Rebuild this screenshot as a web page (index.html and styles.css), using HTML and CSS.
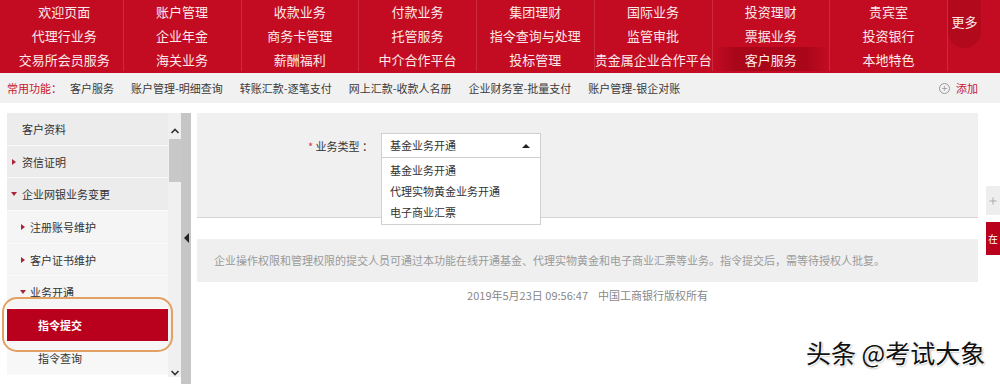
FILE: index.html
```html
<!DOCTYPE html>
<html lang="zh-CN">
<head>
<meta charset="utf-8">
<title>中国工商银行企业网银</title>
<link rel="stylesheet" href="styles.css">
</head>
<body>
<div class="page">
  <nav class="topnav">
    <a class="nav-cell">欢迎页面</a>
    <a class="nav-cell">账户管理</a>
    <a class="nav-cell">收款业务</a>
    <a class="nav-cell">付款业务</a>
    <a class="nav-cell">集团理财</a>
    <a class="nav-cell">国际业务</a>
    <a class="nav-cell">投资理财</a>
    <a class="nav-cell">贵宾室</a>
    <div class="more-cell"><span class="more-pill">更多</span></div>
    <a class="nav-cell">代理行业务</a>
    <a class="nav-cell">企业年金</a>
    <a class="nav-cell">商务卡管理</a>
    <a class="nav-cell">托管服务</a>
    <a class="nav-cell">指令查询与处理</a>
    <a class="nav-cell">监管审批</a>
    <a class="nav-cell">票据业务</a>
    <a class="nav-cell">投资银行</a>
    <a class="nav-cell">交易所会员服务</a>
    <a class="nav-cell">海关业务</a>
    <a class="nav-cell">薪酬福利</a>
    <a class="nav-cell">中介合作平台</a>
    <a class="nav-cell">投标管理</a>
    <a class="nav-cell">贵金属企业合作平台</a>
    <a class="nav-cell active">客户服务</a>
    <a class="nav-cell">本地特色</a>
  </nav>

  <div class="quickbar">
    <span class="quick-label">常用功能：</span>
    <a class="quick-item">客户服务</a>
    <a class="quick-item">账户管理-明细查询</a>
    <a class="quick-item">转账汇款-逐笔支付</a>
    <a class="quick-item">网上汇款-收款人名册</a>
    <a class="quick-item">企业财务室-批量支付</a>
    <a class="quick-item">账户管理-银企对账</a>
    <a class="quick-add"><span class="plus">+</span>添加</a>
  </div>

  <div class="workspace">
    <aside class="sidebar">
      <ul class="menu">
        <li class="menu-item lvl1">客户资料</li>
        <li class="menu-item lvl1 arrow-right">资信证明</li>
        <li class="menu-item lvl1 arrow-down">企业网银业务变更</li>
        <li class="menu-item lvl2 arrow-right">注册账号维护</li>
        <li class="menu-item lvl2 arrow-right">客户证书维护</li>
        <li class="menu-item lvl2 arrow-down">业务开通</li>
        <li class="menu-item lvl3 selected">指令提交</li>
        <li class="menu-item lvl3">指令查询</li>
      </ul>
      <div class="scrollbar">
        <svg class="chev" width="10" height="8" viewBox="0 0 10 8"><path d="M1.5 6 L5 2.5 L8.5 6" fill="none" stroke="#333" stroke-width="1.6"/></svg>
        <div class="thumb"></div>
        <div class="track-space"></div>
        <svg class="chev" width="10" height="8" viewBox="0 0 10 8"><path d="M1.5 2 L5 5.5 L8.5 2" fill="none" stroke="#333" stroke-width="1.6"/></svg>
      </div>
    </aside>
    <div class="splitter"><span class="split-arrow"></span></div>

    <main class="main">
      <section class="form-panel">
        <div class="form-row">
          <label class="form-label"><span class="req">*</span> 业务类型 ：</label>
          <div class="select">
            <div class="select-box">基金业务开通<span class="caret-up"></span></div>
            <ul class="select-list">
              <li>基金业务开通</li>
              <li>代理实物黄金业务开通</li>
              <li>电子商业汇票</li>
            </ul>
          </div>
        </div>
      </section>
      <div class="notice">企业操作权限和管理权限的提交人员可通过本功能在线开通基金、代理实物黄金和电子商业汇票等业务。指令提交后，需等待授权人批复。</div>
      <footer class="footer">2019年5月23日 09:56:47&nbsp;&nbsp;&nbsp;&nbsp;中国工商银行版权所有</footer>
    </main>
  </div>

  <div class="side-tabs">
    <div class="side-tab gray">
      <svg width="8" height="8" viewBox="0 0 8 8"><path d="M4 0.5 V7.5 M0.5 4 H7.5" stroke="#aaa" stroke-width="1"/></svg>
    </div>
    <div class="side-tab red">在</div>
  </div>

  <div class="annotation"></div>
  <div class="watermark">头条 @考试大象</div>
</div>
</body>
</html>
```

FILE: styles.css
```css
* { box-sizing: border-box; }
html, body { margin: 0; padding: 0; }
body {
  font-family: "Noto Sans CJK SC", "Microsoft YaHei", sans-serif;
  background: #fff;
  color: #333;
  width: 1000px;
  height: 384px;
  overflow: hidden;
}
.page { position: relative; width: 1000px; height: 384px; overflow: hidden; }
a { text-decoration: none; color: inherit; }
ul { list-style: none; margin: 0; padding: 0; }

/* top nav */
.topnav {
  display: grid;
  grid-template-columns: repeat(8, 117.75px) 1fr;
  grid-template-rows: 23px 24px 24px;
  padding-left: 5px;
  padding-bottom: 2px;
  height: 73px;
  background: #c30c22;
}
.nav-cell {
  display: flex;
  align-items: center;
  justify-content: center;
  color: #fbe9ec;
  font-size: 13px;
  border-left: 1px solid rgba(255,255,255,0.13);
  white-space: nowrap;
}
.nav-cell:nth-child(10), .nav-cell:nth-child(1), .nav-cell:nth-child(18) { border-left-color: transparent; }
.nav-cell.active {
  background: linear-gradient(90deg, #c30c22 0%, #a9061a 20%, #a9061a 80%, #c30c22 100%);
}
.more-cell {
  grid-column: 9;
  grid-row: 1 / 4;
  border-left: 1px solid rgba(255,255,255,0.13);
}
.more-pill {
  display: flex;
  align-items: center;
  justify-content: center;
  width: 33px;
  height: 48px;
  padding-bottom: 6px;
  background: #b3091c;
  border-radius: 0 0 16px 16px;
  color: #fbe9ec;
  font-size: 13px;
}

/* quick bar */
.quickbar {
  display: flex;
  align-items: center;
  height: 30px;
  padding: 0 22px 0 7px;
  background: #f1f1f1;
  font-size: 11px;
  color: #3a3a3a;
}
.quick-label { color: #c7162b; margin-right: 8px; }
.quick-item { margin-right: 17px; }
.quick-add {
  margin-left: auto;
  color: #c7162b;
  display: flex;
  align-items: center;
}
.plus {
  display: inline-flex;
  align-items: center;
  justify-content: center;
  width: 11px;
  height: 11px;
  border: 1px solid #999;
  border-radius: 50%;
  color: #999;
  font-size: 10px;
  line-height: 1;
  margin-right: 6px;
}

/* workspace */
.workspace {
  display: flex;
  margin-top: 10px;
  padding-left: 7px;
  height: 271px;
}
.sidebar {
  display: flex;
  width: 174px;
  height: 100%;
}
.menu { width: 161px; }
.menu-item {
  position: relative;
  height: 32.7px;
  display: flex;
  align-items: center;
  font-size: 11px;
  color: #333;
  border-bottom: 1px solid #fafafa;
  background: #ececec;
  padding-left: 15px;
}
.menu-item.lvl2 { background: #f5f5f5; padding-left: 23px; }
.menu-item.lvl3 { background: #f7f7f7; padding-left: 31px; }
.menu-item.arrow-right::before,
.menu-item.arrow-down::before {
  content: "";
  position: absolute;
  top: 50%;
}
.menu-item.arrow-right::before {
  left: 5px;
  margin-top: -3px;
  border-left: 4px solid #a8253a;
  border-top: 3px solid transparent;
  border-bottom: 3px solid transparent;
}
.menu-item.arrow-down::before {
  left: 4px;
  margin-top: -2px;
  border-top: 4px solid #a8253a;
  border-left: 3px solid transparent;
  border-right: 3px solid transparent;
}
.menu-item.lvl2.arrow-right::before { left: 14px; }
.menu-item.lvl2.arrow-down::before { left: 13px; }
.menu-item.selected {
  background: #b9001c;
  color: #fff;
  font-weight: bold;
}

.scrollbar {
  width: 13px;
  background: #f0f0f0;
  display: flex;
  flex-direction: column;
  align-items: center;
  height: 264px;
  padding-top: 14px;
}
.chev { display: block; flex: none; }
.thumb {
  width: 12px;
  height: 43px;
  margin-top: 4px;
  background: #c8c8c8;
}
.track-space { flex: 1; }

.splitter {
  width: 10px;
  height: 100%;
  margin-right: 6px;
  background-color: #fff;
  background-image: radial-gradient(circle, #c4c4c4 0.7px, transparent 0.9px);
  background-size: 2px 2px;
  padding-top: 120px;
  display: flex;
  justify-content: center;
  align-items: flex-start;
}
.split-arrow {
  width: 0; height: 0;
  border-right: 5px solid #222;
  border-top: 5px solid transparent;
  border-bottom: 5px solid transparent;
}

.main { width: 781px; }
.form-panel {
  height: 105px;
  background: #f0f0f0;
  border-bottom: 1px solid #d4d4d4;
  padding-top: 20px;
}
.form-row { display: flex; align-items: center; }
.form-label {
  width: 176px;
  text-align: right;
  font-size: 11px;
  color: #333;
  margin-right: 8px;
}
.req { color: #d23b4a; }
.select { position: relative; width: 160px; }
.select-box {
  position: relative;
  height: 25px;
  line-height: 23px;
  padding-left: 8px;
  background: #fff;
  border: 1px solid #cfcfcf;
  font-size: 11px;
  color: #333;
}
.caret-up {
  position: absolute;
  right: 10px;
  top: 10px;
  border-bottom: 4px solid #222;
  border-left: 4px solid transparent;
  border-right: 4px solid transparent;
}
.select-list {
  position: absolute;
  left: 0;
  top: 25px;
  width: 160px;
  background: #fff;
  border: 1px solid #d0d0d0;
  border-top: none;
  z-index: 2;
  padding: 2px 0 1px;
}
.select-list li {
  height: 21px;
  line-height: 21px;
  padding-left: 8px;
  font-size: 11px;
  color: #333;
}

.notice {
  margin-top: 21px;
  height: 43px;
  line-height: 43px;
  background: #efefef;
  padding-left: 17px;
  font-size: 11px;
  color: #9a9a9a;
  white-space: nowrap;
}
.footer {
  margin-top: 5px;
  text-align: center;
  font-size: 11px;
  line-height: 16px;
  color: #888;
}

/* floating side tabs */
.side-tabs {
  position: absolute;
  left: 986px;
  top: 186px;
  width: 14px;
}
.side-tab {
  width: 14px;
  display: flex;
  align-items: center;
  justify-content: center;
  font-size: 10px;
  line-height: 1;
}
.side-tab.gray { height: 29px; background: #eeeeee; }
.side-tab.red { height: 33px; margin-top: 7px; background: #b9001c; color: #fff; }

.annotation {
  position: absolute;
  left: 2px;
  top: 297px;
  width: 171px;
  height: 55px;
  border: 2.5px solid #e2a062;
  border-radius: 15px;
  pointer-events: none;
}
.watermark {
  position: absolute;
  left: 806px;
  top: 336px;
  font-size: 25px;
  line-height: 32px;
  color: #111;
  white-space: nowrap;
  text-shadow: -1px -1px 0 #fff, 1px 1px 0 #fff, 1px 1px 2px #777;
}
```
